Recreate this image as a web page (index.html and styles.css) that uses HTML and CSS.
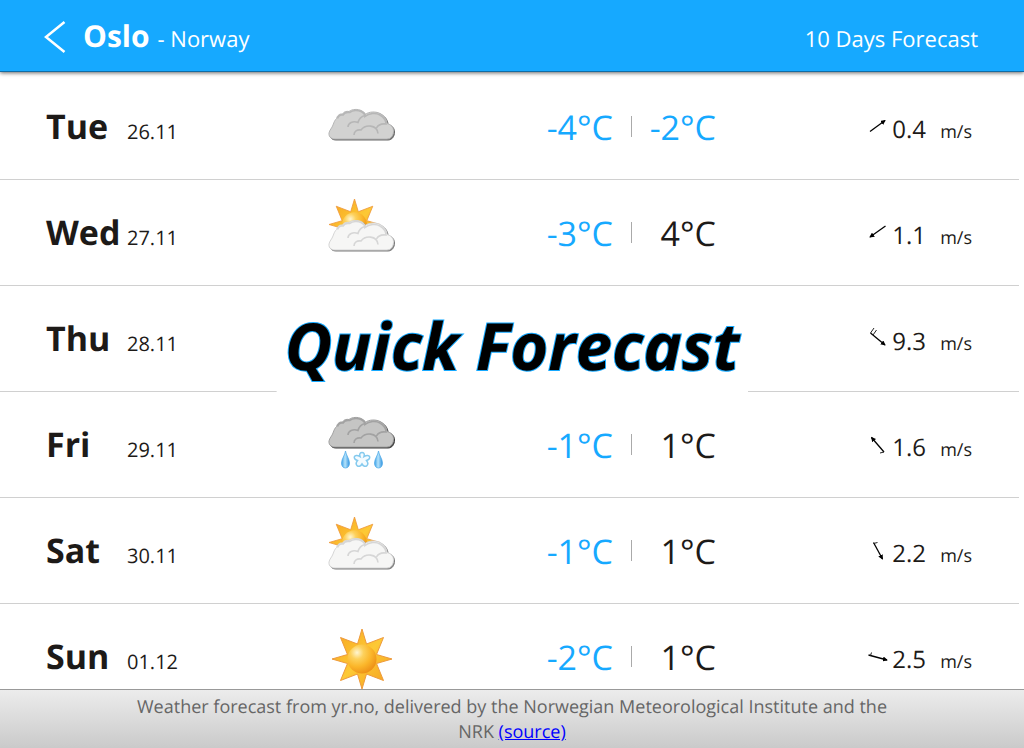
FILE: index.html
```html
<!DOCTYPE html>
<html lang="en">
<head>
<meta charset="utf-8">
<meta name="viewport" content="width=device-width, initial-scale=1">
<title>Quick Forecast</title>
<link rel="stylesheet" href="styles.css">
</head>
<body>
<svg class="defs" aria-hidden="true">
  <defs>
    <radialGradient id="sun-core" cx="0.33" cy="0.28" r="0.75">
      <stop offset="0" stop-color="#fff6d2"/>
      <stop offset="0.3" stop-color="#fdd15c"/>
      <stop offset="0.65" stop-color="#fbb62a"/>
      <stop offset="1" stop-color="#ee9218"/>
    </radialGradient>
    <linearGradient id="sun-ray" x1="0" y1="0" x2="1" y2="1">
      <stop offset="0" stop-color="#f6a21e"/>
      <stop offset="0.5" stop-color="#fdc935"/>
      <stop offset="1" stop-color="#f39c1c"/>
    </linearGradient>
    <linearGradient id="drop-fill" x1="0" y1="0" x2="1" y2="0">
      <stop offset="0" stop-color="#3a9fe8"/>
      <stop offset="0.45" stop-color="#b4e3fb"/>
      <stop offset="1" stop-color="#3193e0"/>
    </linearGradient>
    <path id="cloud-shape" d="M7 30C3 30 .5 27.500 1 24C1.500 21 4 19 5 16C6 13 7 11 8.500 9.500C9.500 6 12 4.500 14.500 5C16 2.500 18.500 2 21 2.500C24 0 30-.2 33.500 1.700C35.500 2.700 36.500 4 37 5.500C41 2.500 48 2 53 5C57 7.500 59 11 59 14.500C63 15.500 65.500 18 65.500 22C65.500 26.500 63 30 59 30Z"/>
    <g id="cloud">
      <use href="#cloud-shape" x="1" y="1" class="cloud-shade"/>
      <use href="#cloud-shape" class="cloud-body"/>
      <g class="cloud-fold">
        <path d="M9.500 9.500C10.500 6.500 12.500 5.500 15 6C17 3 19 3 21.500 3.500C25 1 30 1 33 2.500C36 4 37 6 37 7.500C41 4 48 3.500 52 6C56 8.500 58 11 58 15C54 14.500 50 16 48.500 19"/>
        <path d="M20 18C20 14 25 11.500 30 13.500C31 10 33 7.500 37 6.500"/>
        <path d="M26 26C26 22 29 20.500 33 21C37 15.500 49 15 50 24.500"/>
      </g>
    </g>
    <path id="star" d="M30 0L34.500 15L51.500 8.500L44.500 25.500L60 30L44.500 34.500L51.500 51.500L34.500 45L30 60L25.500 45L8.500 51.500L15.500 34.500L0 30L15.500 25.500L8.500 8.500L25.500 15Z"/>
    <g id="sun">
      <use href="#star" fill="url(#sun-ray)" stroke="#ee9a3c"/>
      <circle cx="30" cy="30" r="14.500" fill="url(#sun-core)"/>
    </g>
    <g id="sun-cloud">
      <use href="#sun" transform="translate(1 0) scale(.85)"/>
      <use href="#cloud" class="light" y="21"/>
    </g>
    <path id="drop" d="M4.500 0C5 4 8.500 8 8.500 12C8.500 15 7 17 4.500 17S.5 15 .5 12C.5 8 4 4 4.500 0Z" fill="url(#drop-fill)" stroke="#4aa8e6" stroke-width=".7"/>
    <marker id="head" viewBox="0 0 6 6" refX="5" refY="3" markerWidth="5" markerHeight="5" markerUnits="userSpaceOnUse" orient="auto"><path d="M0 0L6 3L0 6Z"/></marker>
  </defs>
</svg>

<header class="topbar">
  <button class="back" type="button" aria-label="Back">
    <svg width="22" height="34" viewBox="0 0 22 34" aria-hidden="true"><path d="M20.500 1L2 16L20.500 31"/></svg>
  </button>
  <h1 class="city">Oslo</h1>
  <span class="country">- Norway</span>
  <span class="range">10 Days Forecast</span>
</header>

<main class="forecast">
  <ul class="days">
    <li class="row">
      <div class="date"><strong class="day">Tue</strong><span>26.11</span></div>
      <svg class="icon" viewBox="0 0 68 68" role="img" aria-label="Cloudy"><use href="#cloud" class="grey" y="16"/></svg>
      <div class="temps"><span class="cold">-4°C</span><i class="divider"></i><span class="max cold">-2°C</span></div>
      <div class="wind"><svg class="arrow" viewBox="0 0 20 20" aria-hidden="true"><path class="shaft" d="M3 14.500L18 3.500"/></svg><span class="speed">0.4</span><span class="unit">m/s</span></div>
    </li>
    <li class="row">
      <div class="date"><strong class="day">Wed</strong><span>27.11</span></div>
      <svg class="icon" viewBox="0 0 68 68" role="img" aria-label="Partly cloudy"><use href="#sun-cloud"/></svg>
      <div class="temps"><span class="cold">-3°C</span><i class="divider"></i><span class="max">4°C</span></div>
      <div class="wind"><svg class="arrow" viewBox="0 0 20 20" aria-hidden="true"><path class="shaft" d="M18.500 3L3 14"/></svg><span class="speed">1.1</span><span class="unit">m/s</span></div>
    </li>
    <li class="row">
      <div class="date"><strong class="day">Thu</strong><span>28.11</span></div>
      <div></div>
      <div></div>
      <div class="wind"><svg class="arrow" viewBox="0 0 20 20" aria-hidden="true"><path class="shaft" d="M3.500 4L18 16"/><path class="barb" d="M3.500 4L7-1M6 6L9.500 1"/></svg><span class="speed">9.3</span><span class="unit">m/s</span></div>
    </li>
    <li class="row">
      <div class="date"><strong class="day">Fri</strong><span>29.11</span></div>
      <svg class="icon" viewBox="0 0 68 68" role="img" aria-label="Sleet">
        <use href="#cloud" class="dark" y="6"/>
        <use href="#drop" x="13" y="40"/><use href="#drop" x="46" y="40"/>
        <path class="flake" d="M32 45.500C30 40 38 40 36 45.500C42 42 44 48 38.500 49.500C42 54 37 58 34 53C31 58 26 54 29.500 49.500C24 48 26 42 32 45.500Z"/>
      </svg>
      <div class="temps"><span class="cold">-1°C</span><i class="divider"></i><span class="max">1°C</span></div>
      <div class="wind"><svg class="arrow" viewBox="0 0 20 20" aria-hidden="true"><path class="shaft" d="M17 17L4.500 2.500"/><path class="barb" d="M17 17L13 18"/></svg><span class="speed">1.6</span><span class="unit">m/s</span></div>
    </li>
    <li class="row">
      <div class="date"><strong class="day">Sat</strong><span>30.11</span></div>
      <svg class="icon" viewBox="0 0 68 68" role="img" aria-label="Partly cloudy"><use href="#sun-cloud"/></svg>
      <div class="temps"><span class="cold">-1°C</span><i class="divider"></i><span class="max">1°C</span></div>
      <div class="wind"><svg class="arrow" viewBox="0 0 20 20" aria-hidden="true"><path class="shaft" d="M6.500 1.500L15.500 18"/><path class="barb" d="M6.500 2.500L10.500 1.500"/></svg><span class="speed">2.2</span><span class="unit">m/s</span></div>
    </li>
    <li class="row">
      <div class="date"><strong class="day">Sun</strong><span>01.12</span></div>
      <svg class="icon" viewBox="0 0 68 68" role="img" aria-label="Sunny"><use href="#sun" x="4" y="6"/></svg>
      <div class="temps"><span class="cold">-2°C</span><i class="divider"></i><span class="max">1°C</span></div>
      <div class="wind"><svg class="arrow" viewBox="0 0 20 20" aria-hidden="true"><path class="shaft" d="M1.500 8L20 13"/><path class="barb" d="M3.500 8.500L4.500 5.500"/></svg><span class="speed">2.5</span><span class="unit">m/s</span></div>
    </li>
  </ul>
  <p class="brand">Quick Forecast</p>
</main>

<footer class="credit">
  <p>Weather forecast from yr.no, delivered by the Norwegian Meteorological Institute and the NRK <a href="#source">(source)</a></p>
</footer>
</body>
</html>
```
FILE: styles.css
```css
* {
  box-sizing: border-box;
}

body {
  display: flex;
  flex-direction: column;
  height: 100vh;
  margin: 0;
  overflow: hidden;
  background: #fff;
  color: #1d1a18;
  font-family: "Open Sans", "Noto Sans", sans-serif;
  text-rendering: geometricPrecision;
}

.defs {
  position: absolute;
  width: 0;
  height: 0;
}

.topbar {
  display: flex;
  flex-shrink: 0;
  align-items: baseline;
  padding: 15px 46px 11px 44px;
  border-bottom: 1px solid #0f6ca6;
  box-shadow: 0 1px 4px rgba(0, 0, 0, 0.6);
  background: #16a9ff;
  color: #fff;
  font-size: 22px;
  line-height: 42px;
  z-index: 1;
}

.back {
  display: flex;
  align-self: center;
  margin: 0 17px 0 0;
  padding: 0;
  border: 0;
  background: none;
  cursor: pointer;
}

.back path {
  fill: none;
  stroke: #fff;
  stroke-width: 2.5;
}

.city {
  margin: 0 8px 0 0;
  font-size: 30px;
}

.range {
  margin-left: auto;
}

.forecast {
  position: relative;
  flex: 1;
  min-height: 0;
  padding: 2px 5px 0 0;
  overflow: hidden;
}

.days {
  margin: 0;
  padding: 0;
  list-style: none;
}

.row {
  display: grid;
  grid-template-columns: 282fr 68px 320fr 256fr;
  align-items: center;
  min-height: 106px;
  padding: 0 47px 0 46px;
  border-bottom: 1px solid #d0d0d0;
}

.date,
.temps,
.wind {
  display: flex;
  align-items: baseline;
}

.date {
  padding-top: 4px;
  font-size: 20px;
  line-height: 48px;
}

.day {
  width: 81px;
  font-size: 34px;
}

.icon {
  width: 68px;
  height: 68px;
  overflow: visible;
}

.temps {
  justify-content: flex-end;
  font-size: 34px;
  line-height: 48px;
}

.cold {
  color: #16a9ff;
}

.divider {
  align-self: center;
  width: 1px;
  height: 21px;
  margin-left: 18px;
  background: #aaa;
}

.max {
  width: 84px;
  text-align: right;
}

.wind {
  justify-content: flex-end;
  line-height: 30px;
}

.arrow {
  align-self: center;
  width: 20px;
  height: 20px;
  margin-right: 5px;
  overflow: visible;
}

.shaft {
  fill: none;
  stroke: #000;
  stroke-width: 1.3;
  marker-end: url(#head);
}

.barb {
  fill: none;
  stroke: #222;
}

.speed {
  width: 48px;
  padding-top: 9px;
  font-size: 24px;
}

.unit {
  font-size: 18px;
}

.brand {
  position: absolute;
  top: 227px;
  left: 50%;
  margin: 0;
  padding: 0 8px;
  transform: translateX(-50%);
  background: #fff;
  box-shadow: 0 0 1px #fff;
  color: #000;
  font-size: 65px;
  font-style: italic;
  font-weight: 700;
  line-height: 94px;
  white-space: nowrap;
  paint-order: stroke;
  -webkit-text-stroke: 2px #16a9ff;
}

.credit {
  flex-shrink: 0;
  padding: 5px 128px 3px;
  border-top: 1px solid #999;
  background: linear-gradient(#ececec, #cacaca);
  color: #666;
  font-size: 18px;
  line-height: 25px;
  text-align: center;
}

.credit p {
  margin: 0;
}

.credit a {
  color: #00f;
}

.grey {
  --body: #d2d2d1;
  --fold: #b6b6b6;
  --shade: #686868;
}

.light {
  --body: #f6f6f5;
  --fold: #d6d6d6;
  --shade: #7c7c7c;
}

.dark {
  --body: #c5c5c4;
  --fold: #a2a2a2;
  --shade: #3c3c3c;
}

.cloud-body {
  fill: var(--body);
  stroke: var(--fold);
}

.cloud-fold {
  fill: none;
  stroke: var(--fold);
  stroke-width: 1.6;
}

.cloud-shade {
  fill: var(--shade);
  stroke: var(--shade);
}

.flake {
  fill: #f4fbff;
  stroke: #85caee;
  stroke-width: 1.5;
}
```
